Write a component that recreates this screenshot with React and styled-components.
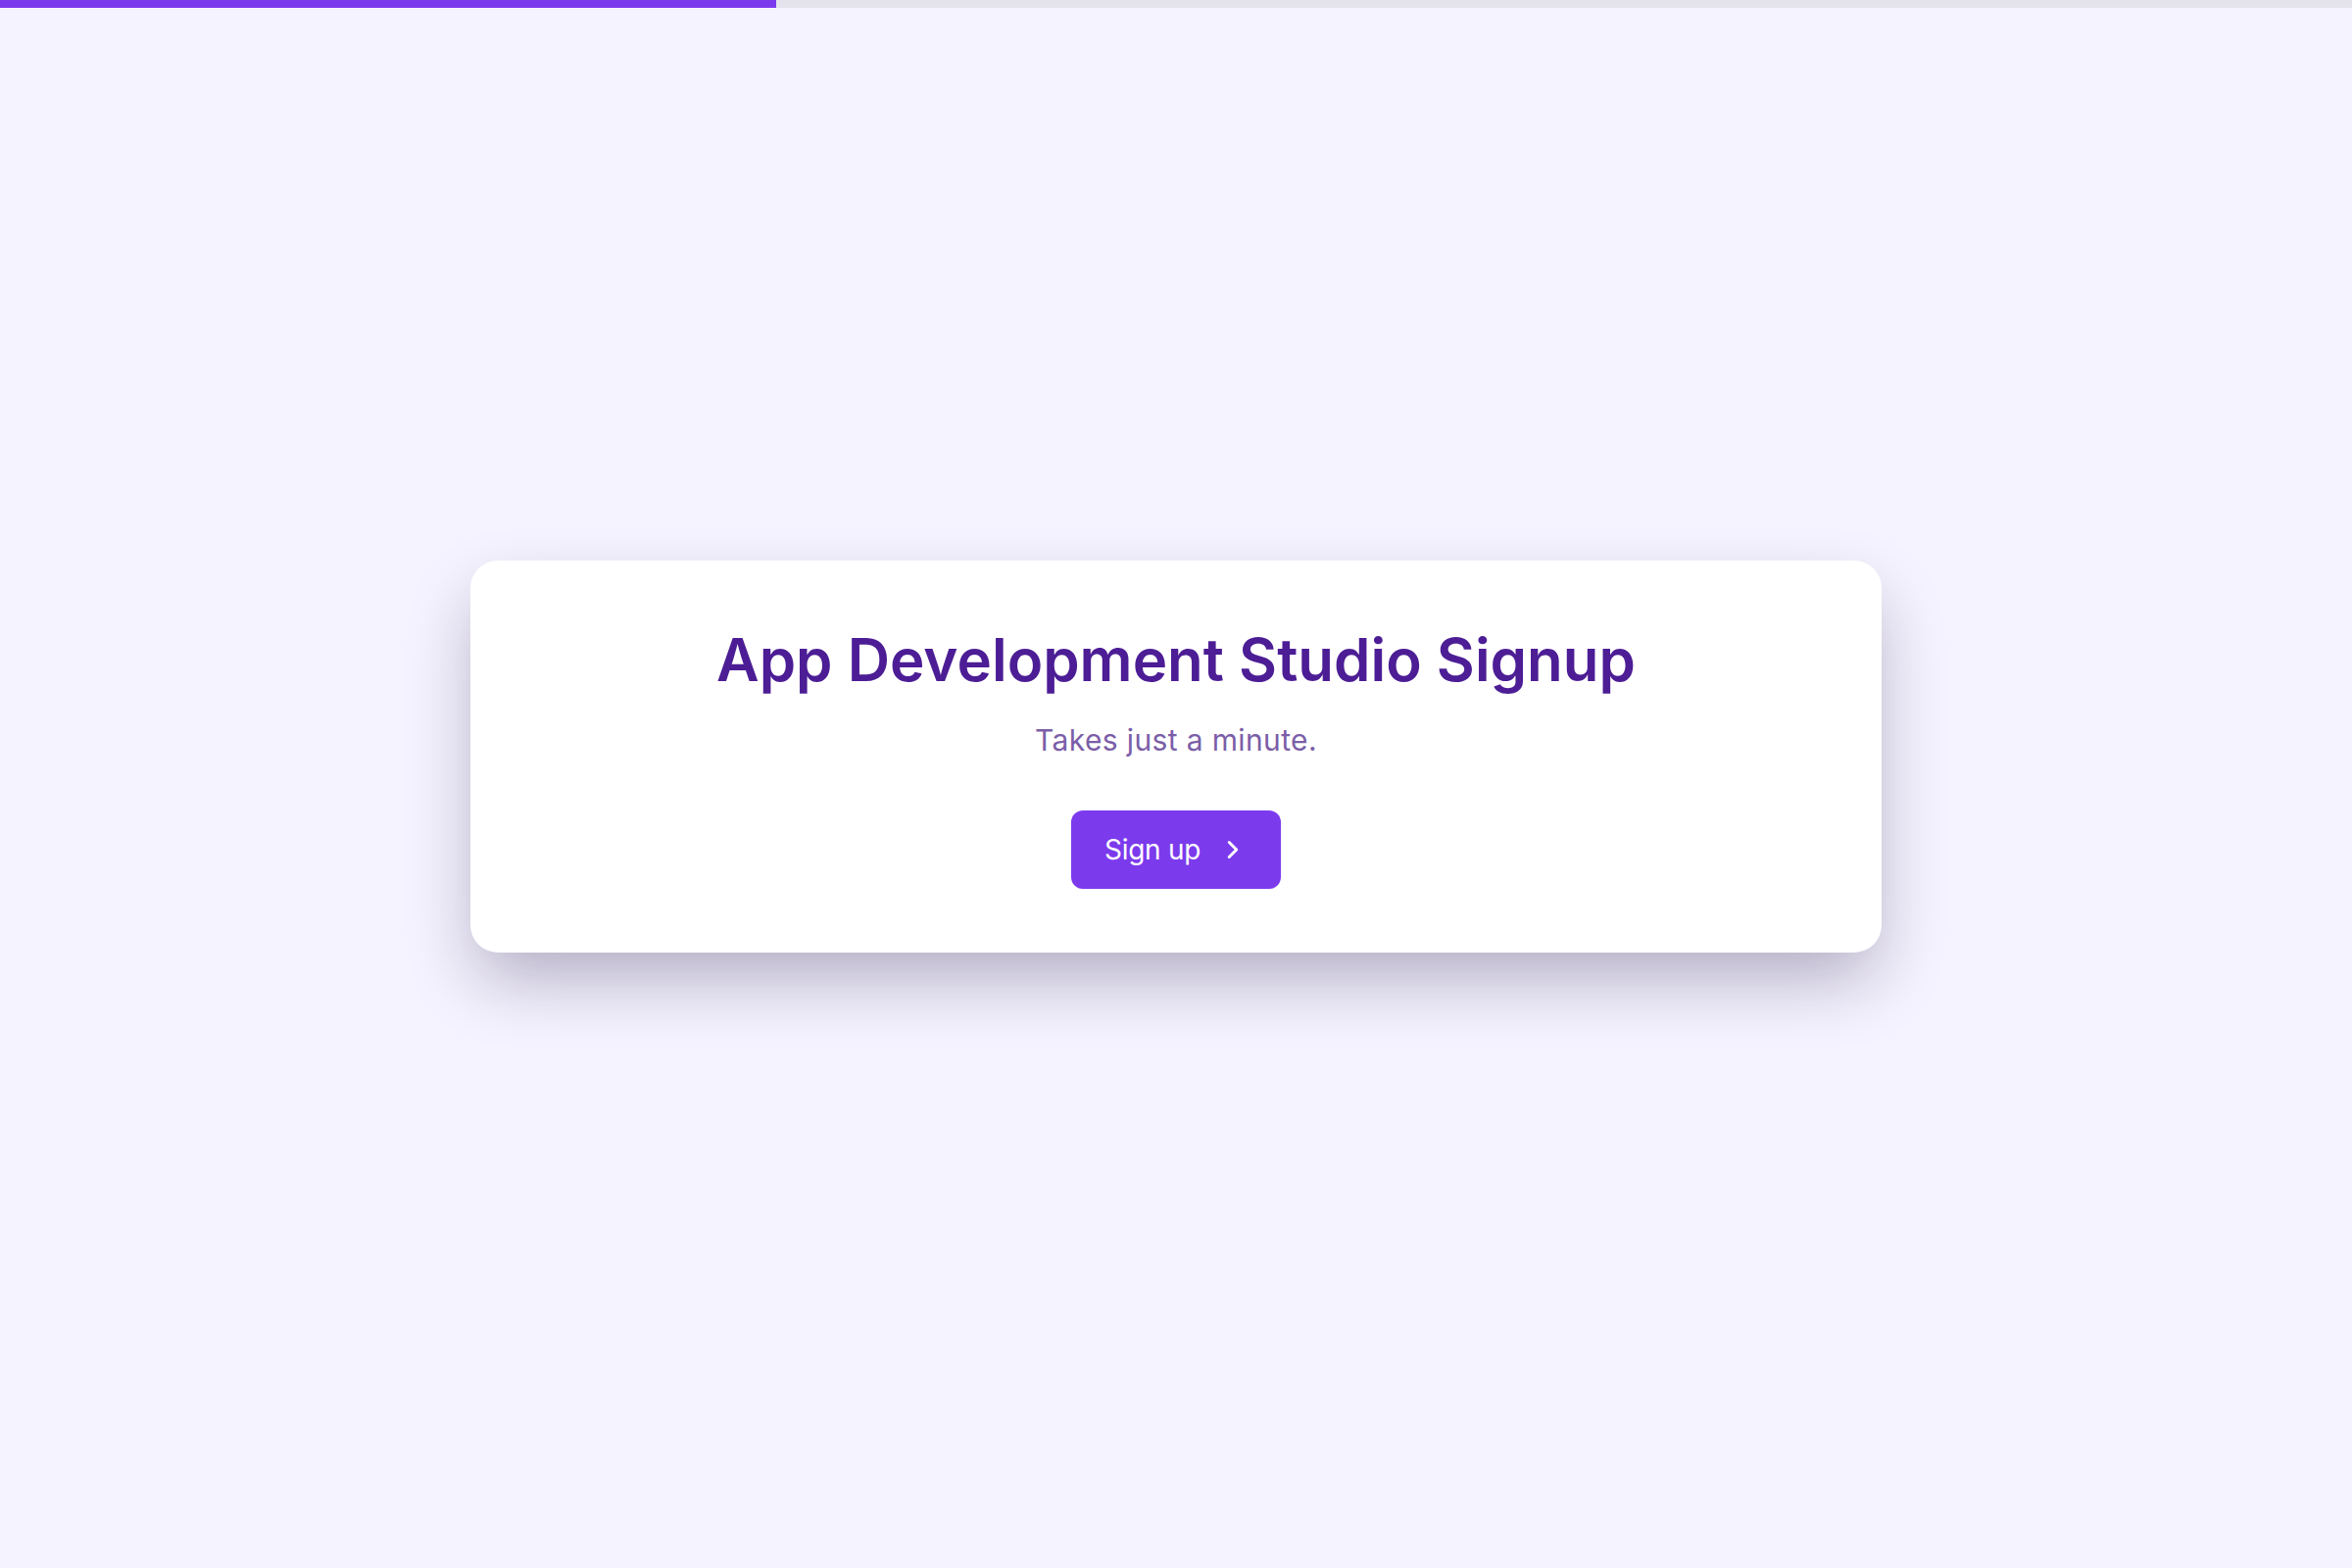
import styled, { createGlobalStyle } from "styled-components";
import { ChevronRight } from "lucide-react";

const GlobalStyle = createGlobalStyle`
  * {
    box-sizing: border-box;
  }

  html,
  body {
    margin: 0;
    padding: 0;
    background: #f5f3ff;
    font-family: Inter, "Open Sans", sans-serif;
  }
`;

const Page = styled.div`
  min-height: 100vh;
  display: flex;
  flex-direction: column;
`;

const ProgressTrack = styled.div`
  height: 8px;
  background: #e4e3ec;
  flex-shrink: 0;
`;

const ProgressFill = styled.div`
  height: 100%;
  background: #7c3aed;
`;

const Main = styled.main`
  flex: 1;
  display: flex;
  align-items: center;
  justify-content: center;
  padding-bottom: 64px;
`;

const Card = styled.section`
  width: 1440px;
  height: 400px;
  background: #ffffff;
  border-radius: 28px;
  box-shadow: 0 32px 70px -8px rgba(30, 20, 60, 0.32);
  display: flex;
  flex-direction: column;
  align-items: center;
  justify-content: center;
`;

const Title = styled.h1`
  margin: 0;
  font-size: 60px;
  line-height: 72px;
  font-weight: 600;
  letter-spacing: 0;
  color: #4c1d95;
`;

const Subtitle = styled.p`
  margin: 25px 0 0;
  font-size: 30px;
  line-height: 42px;
  font-weight: 400;
  letter-spacing: 0.012em;
  color: #7b5ea8;
`;

const SignupButton = styled.button`
  margin-top: 51px;
  height: 80px;
  padding: 0 34px;
  display: flex;
  align-items: center;
  gap: 18px;
  border: none;
  border-radius: 12px;
  background: #7c3aed;
  color: #ffffff;
  font-family: inherit;
  font-size: 28px;
  font-weight: 400;
  letter-spacing: -0.01em;
  cursor: pointer;
`;

const progress = 33;

export default function App() {
  return (
    <Page>
      <GlobalStyle />
      <ProgressTrack>
        <ProgressFill style={{ width: `${progress}%` }} />
      </ProgressTrack>
      <Main>
        <Card>
          <Title>App Development Studio Signup</Title>
          <Subtitle>Takes just a minute.</Subtitle>
          <SignupButton>
            Sign up
            <ChevronRight size={30} strokeWidth={2.4} />
          </SignupButton>
        </Card>
      </Main>
    </Page>
  );
}
